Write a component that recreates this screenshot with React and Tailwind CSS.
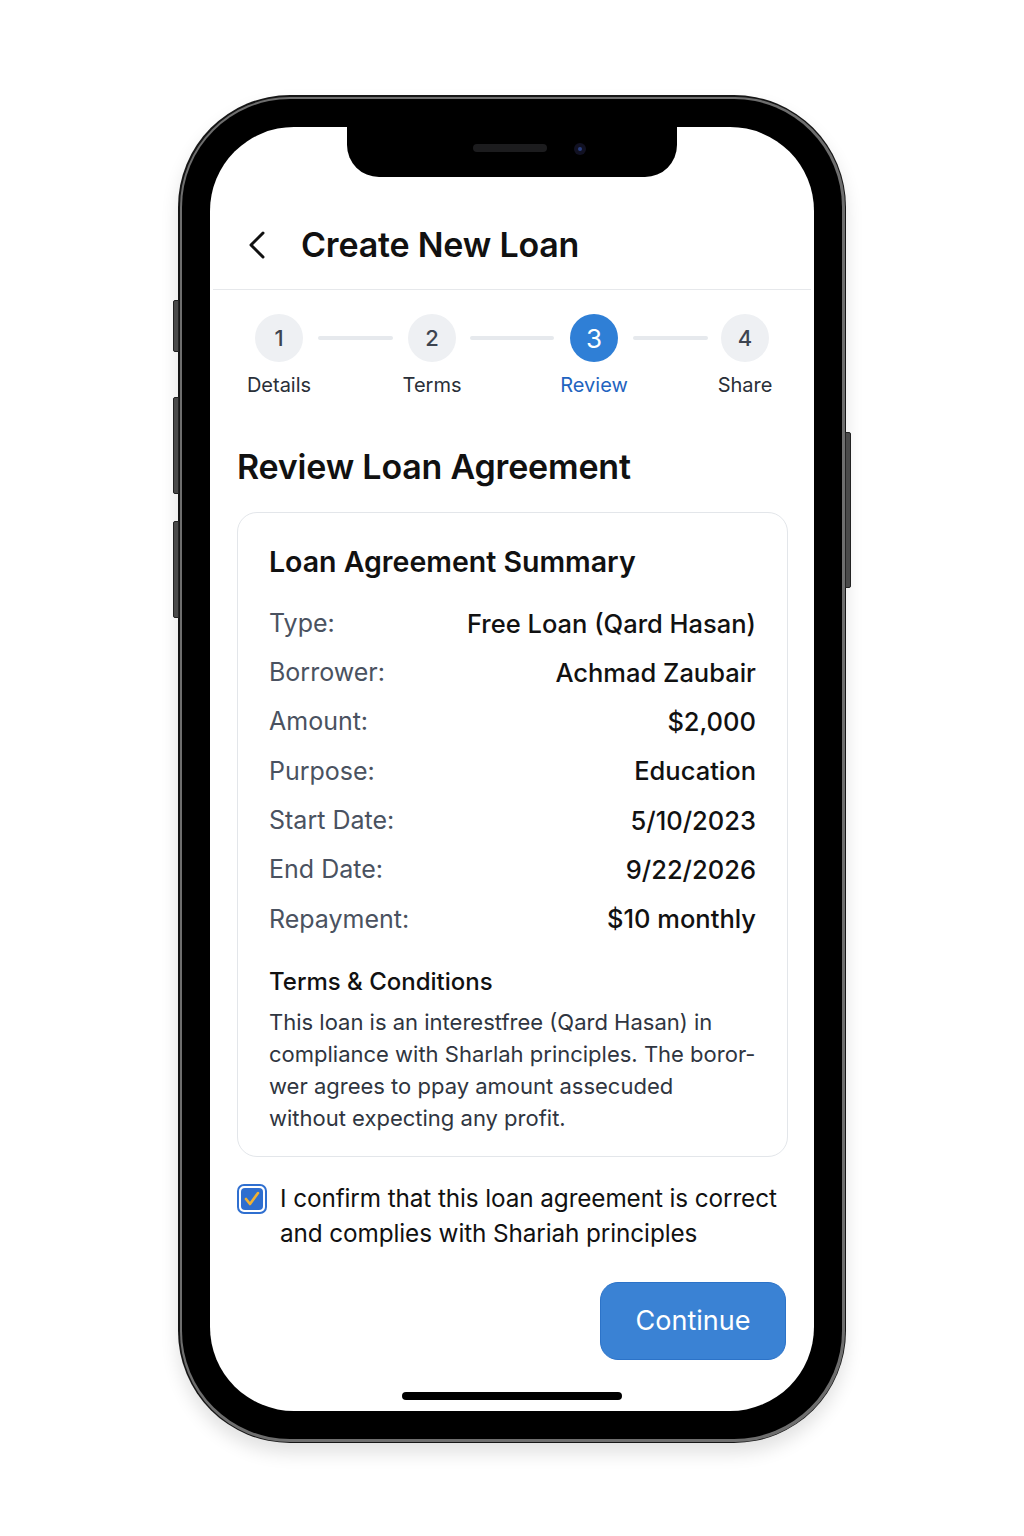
import React from "react";

const rows = [
  ["Type:", "Free Loan (Qard Hasan)"],
  ["Borrower:", "Achmad Zaubair"],
  ["Amount:", "$2,000"],
  ["Purpose:", "Education"],
  ["Start Date:", "5/10/2023"],
  ["End Date:", "9/22/2026"],
  ["Repayment:", "$10 monthly"],
];

function Step({ n, label, active }) {
  return (
    <div className="flex w-[48px] flex-col items-center">
      <div
        className={
          active
            ? "flex h-[48px] w-[48px] items-center justify-center rounded-full bg-[#2f7fd6] text-[26px] text-white"
            : "flex h-[48px] w-[48px] items-center justify-center rounded-full bg-[#eef0f3] text-[22px] font-medium text-[#3d4450]"
        }
      >
        {n}
      </div>
      <div
        className={
          active
            ? "mt-[9px] whitespace-nowrap text-[20px] leading-[28px] text-[#1f64c0]"
            : "mt-[9px] whitespace-nowrap text-[20px] leading-[28px] text-[#2a2f38]"
        }
      >
        {label}
      </div>
    </div>
  );
}

function Line({ w, ml }) {
  return (
    <div className={`flex h-[48px] items-center ${ml}`}>
      <div className={`h-[4px] rounded-full bg-[#e6e9ed] ${w}`} />
    </div>
  );
}

export default function App() {
  return (
    <div className="min-h-[1536px] bg-white pt-[95px] font-['Inter','Noto_Sans',sans-serif]">
      <div className="relative mx-auto w-[668px]">
        {/* side buttons */}
        <div className="absolute left-[-5px] top-[205px] h-[52px] w-[6px] rounded-l-[2px] border border-[#222] bg-[#4a4a4a]" />
        <div className="absolute left-[-5px] top-[302px] h-[97px] w-[6px] rounded-l-[2px] border border-[#222] bg-[#4a4a4a]" />
        <div className="absolute left-[-5px] top-[426px] h-[97px] w-[6px] rounded-l-[2px] border border-[#222] bg-[#4a4a4a]" />
        <div className="absolute right-[-5px] top-[337px] h-[156px] w-[6px] rounded-r-[2px] border border-[#222] bg-[#4a4a4a]" />

        <div className="h-[1348px] rounded-[112px] bg-[#151515] p-[1.5px] shadow-[0_10px_18px_rgba(0,0,0,0.12)]">
          <div className="h-full rounded-[110px] bg-[#6e6e6e] p-[2.5px]">
            <div className="h-full rounded-[108px] bg-black p-[28px]">
              <div className="relative flex h-full flex-col overflow-hidden rounded-[84px] bg-white">
                {/* notch */}
                <div className="absolute left-[137px] top-0 h-[50px] w-[330px] rounded-b-[32px] bg-black">
                  <div className="absolute left-[126px] top-[17px] h-[8px] w-[74px] rounded-full bg-[#1c1c1e]" />
                  <div className="absolute left-[227px] top-[16px] h-[12px] w-[12px] rounded-full bg-[#111122]">
                    <div className="m-[4px] h-[4px] w-[4px] rounded-full bg-[#2a3f80]" />
                  </div>
                </div>

                {/* header */}
                <div className="mx-[3px] flex items-center border-b border-[#e6e8eb] pb-[19px] pl-[34px] pt-[93px]">
                  <svg width="20" height="30" viewBox="0 0 20 30" className="shrink-0">
                    <polyline
                      points="16,3 4,15 16,27"
                      fill="none"
                      stroke="#111"
                      strokeWidth="3"
                      strokeLinecap="round"
                      strokeLinejoin="round"
                    />
                  </svg>
                  <h1 className="ml-[34px] text-[34px] font-semibold leading-[50px] tracking-[-0.2px] text-[#111]">
                    Create New Loan
                  </h1>
                </div>

                {/* stepper */}
                <div className="mt-[24px] flex items-start pl-[45px]">
                  <Step n="1" label="Details" />
                  <Line w="w-[75px]" ml="mx-[15px]" />
                  <Step n="2" label="Terms" />
                  <Line w="w-[84px]" ml="ml-[14px] mr-[16px]" />
                  <Step n="3" label="Review" active />
                  <Line w="w-[75px]" ml="ml-[15px] mr-[13px]" />
                  <Step n="4" label="Share" />
                </div>

                <div className="pl-[27px] pr-[26px]">
                  <h2 className="mt-[47px] text-[34px] font-semibold leading-[42px] tracking-[-0.2px] text-[#111]">
                    Review Loan Agreement
                  </h2>

                  {/* card */}
                  <div className="mt-[24px] rounded-[20px] border border-[#e3e6ea] px-[31px] pb-[22px] pt-[32px]">
                    <div className="text-[28.5px] font-semibold leading-[34px] text-[#111]">
                      Loan Agreement Summary
                    </div>
                    <div className="mt-[20px]">
                      {rows.map(([k, v]) => (
                        <div key={k} className="flex h-[49.3px] items-center justify-between">
                          <span className="text-[25px] text-[#4a5260]">{k}</span>
                          <span className="text-[25.5px] font-medium text-[#111]">{v}</span>
                        </div>
                      ))}
                    </div>
                    <div className="mt-[22px] text-[24px] font-medium leading-[32px] text-[#111]">
                      Terms &amp; Conditions
                    </div>
                    <p className="mt-[8px] whitespace-nowrap text-[22px] leading-[32px] text-[#2f3540]">
                      This loan is an interestfree (Qard Hasan) in
                      <br />
                      compliance with Sharlah principles. The boror-
                      <br />
                      wer agrees to ppay amount assecuded
                      <br />
                      without expecting any profit.
                    </p>
                  </div>

                  {/* confirm */}
                  <div className="mt-[24px] flex items-start">
                    <div className="mt-[3px] flex h-[30px] w-[30px] shrink-0 items-center justify-center rounded-[7px] border-2 border-[#2f6fd0] bg-white p-[2px]">
                      <div className="flex h-full w-full items-center justify-center rounded-[4px] bg-[#2f6ecf]">
                        <svg width="18" height="18" viewBox="0 0 18 18">
                          <polyline
                            points="3,9 7,14 15,3"
                            fill="none"
                            stroke="#f2b233"
                            strokeWidth="2.6"
                            strokeLinecap="round"
                            strokeLinejoin="round"
                          />
                        </svg>
                      </div>
                    </div>
                    <p className="ml-[13px] whitespace-nowrap text-[24.3px] leading-[35px] tracking-[-0.1px] text-[#111]">
                      I confirm that this loan agreement is correct
                      <br />
                      and complies with Shariah principles
                    </p>
                  </div>

                  <div className="mt-[31px] flex justify-end pr-[2px]">
                    <button className="flex h-[78px] w-[186px] items-center justify-center rounded-[18px] border border-[#2c73c8] bg-[#3a82d4] text-[27px] text-white">
                      Continue
                    </button>
                  </div>
                </div>

                {/* home indicator */}
                <div className="absolute bottom-[11px] left-[192px] h-[8px] w-[220px] rounded-full bg-black" />
              </div>
            </div>
          </div>
        </div>
      </div>
    </div>
  );
}
